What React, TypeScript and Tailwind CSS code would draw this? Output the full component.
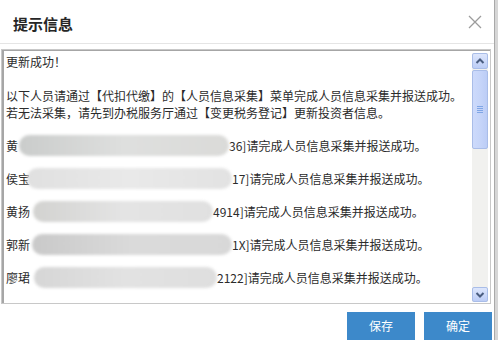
import React from "react";

type MaskedRow = {
  name: string;
  shift: number;
  mask: number;
  tail: string;
  tone: string;
};

const rows: MaskedRow[] = [
  { name: "黄", shift: 1, mask: 210, tail: "36]", tone: "from-[#cacccb] via-[#dedfde] to-[#dadad8]" },
  { name: "侯宝", shift: -3, mask: 205, tail: "17]", tone: "from-[#e0e0e0] via-[#e9e9e9] to-[#e2e2e2]" },
  { name: "黄扬", shift: 3, mask: 180, tail: "4914]", tone: "from-[#d2d2d0] via-[#e4e4e4] to-[#e0e0e0]" },
  { name: "郭新", shift: 2, mask: 200, tail: "1X]", tone: "from-[#c9c9c9] via-[#dadada] to-[#d8d8d8]" },
  { name: "廖珺", shift: 4, mask: 183, tail: "2122]", tone: "from-[#d6d6d6] via-[#e2e2e2] to-[#dedede]" },
];

function Chevron({ up }: { up?: boolean }) {
  return (
    <svg width="10" height="8" viewBox="0 0 10 8">
      <path
        d={up ? "M1.5 6 L5 2.5 L8.5 6" : "M1.5 2 L5 5.5 L8.5 2"}
        fill="none"
        stroke="#4a5d80"
        strokeWidth="2"
      />
    </svg>
  );
}

function ScrollBar() {
  return (
    <div className="w-[16px] mt-[2px] mb-[1px] mr-[2px] flex flex-col bg-[#f1f1ef]">
      <div className="h-[16px] rounded-[2px] border border-[#a9bde8] bg-gradient-to-b from-[#dde6fc] to-[#bccdf6] flex items-center justify-center">
        <Chevron up />
      </div>
      <div className="mt-[1px] h-[79px] rounded-[2px] border border-[#a9bde8] bg-gradient-to-r from-[#cddafb] via-[#c6d5f9] to-[#bccdf6] flex flex-col items-center justify-center gap-[1px]">
        <div className="w-[6px] h-[1px] bg-[#7fa6e6]" />
        <div className="w-[6px] h-[1px] bg-[#7fa6e6]" />
        <div className="w-[6px] h-[1px] bg-[#7fa6e6]" />
        <div className="w-[6px] h-[1px] bg-[#7fa6e6]" />
      </div>
      <div className="flex-1" />
      <div className="h-[15px] rounded-[2px] border border-[#a9bde8] bg-gradient-to-b from-[#dde6fc] to-[#bccdf6] flex items-center justify-center">
        <Chevron />
      </div>
    </div>
  );
}

export default function App() {
  return (
    <div
      lang="zh-CN"
      className="w-[498px] h-[340px] bg-white flex overflow-hidden text-[#2b2b2b] font-['Noto_Sans_CJK_SC',sans-serif]"
    >
      <div className="w-[494px] flex flex-col">
        {/* header */}
        <div className="h-[44px] shrink-0 border-b border-[#e5e5e5] flex items-center justify-between pl-[13px] pr-[12px]">
          <span className="mt-[4px] text-[15px] font-bold leading-none text-[#262626]">提示信息</span>
          <svg width="14" height="14" viewBox="0 0 14 14">
            <path d="M1 1L13 13M13 1L1 13" stroke="#9c9c9c" strokeWidth="1.3" />
          </svg>
        </div>

        {/* message box */}
        <div className="mt-[5px] ml-[1px] w-[490px] h-[255px] shrink-0 border border-[#c8c8c8] flex">
          <div className="flex-1 min-w-0 flex border-l-2 border-t border-[#a6a6a6]">
            <div className="flex-1 min-w-0 overflow-hidden pl-[2px] pt-[2px] text-[12px] leading-[17px] whitespace-nowrap">
              <div className="h-[17px]">更新成功！</div>
              <div className="h-[17px]" />
              <div className="h-[17px]">以下人员请通过【代扣代缴】的【人员信息采集】菜单完成人员信息采集并报送成功。</div>
              <div className="h-[17px]">若无法采集，请先到办税服务厅通过【变更税务登记】更新投资者信息。</div>
              <div className="h-[16px]" />
              {rows.map((r) => (
                <React.Fragment key={r.name}>
                  <div className="h-[17px] flex items-center">
                    <span>{r.name}</span>
                    <div
                      className={`h-[21px] shrink-0 rounded-full blur-[1.5px] bg-gradient-to-r ${r.tone}`}
                      style={{ width: r.mask, marginLeft: r.shift }}
                    />
                    <span>{r.tail}请完成人员信息采集并报送成功。</span>
                  </div>
                  <div className="h-[16px]" />
                </React.Fragment>
              ))}
            </div>
            <ScrollBar />
          </div>
        </div>

        {/* footer */}
        <div className="mt-[8px] flex justify-end gap-[9px] pr-[2px]">
          <button className="w-[68px] h-[28px] bg-[#3d89ca] text-white text-[12px]">保存</button>
          <button className="w-[68px] h-[28px] bg-[#3d89ca] text-white text-[12px]">确定</button>
        </div>
      </div>
      <div className="w-[4px] border-l border-[#a9a9a9] bg-[#d6d6d6]" />
    </div>
  );
}
